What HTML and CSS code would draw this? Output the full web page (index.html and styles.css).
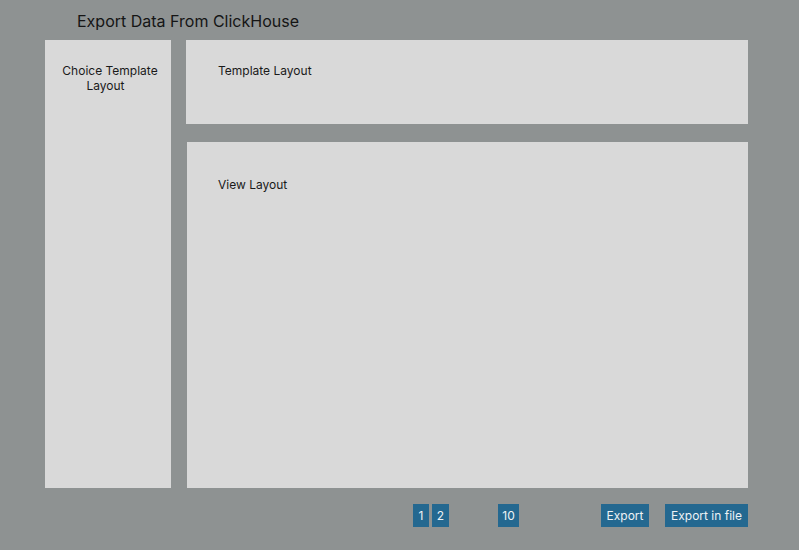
FILE: index.html
```html
<!DOCTYPE html>
<html>
<head>
<meta charset="utf-8">
<link rel="stylesheet" href="styles.css">
</head>
<body>
<div class="page">
  <header class="header"><h1 class="title">Export Data From ClickHouse</h1></header>
  <main class="main">
    <aside class="sidebar">Choice Template<br>Layout</aside>
    <div class="content">
      <section class="template-panel">Template Layout</section>
      <section class="view-panel">View Layout</section>
    </div>
  </main>
  <footer class="footer">
    <div class="pager">
      <span class="btn btn-1">1</span>
      <span class="btn btn-2">2</span>
      <span class="btn btn-10">10</span>
    </div>
    <span class="btn btn-export">Export</span>
    <span class="btn btn-file">Export in file</span>
  </footer>
</div>
</body>
</html>
```

FILE: styles.css
```css
html, body {
  margin: 0;
  padding: 0;
}
body {
  background: #8e9292;
  font-family: Inter, "Noto Sans", sans-serif;
  color: #1a1a1a;
  width: 799px;
  height: 550px;
  overflow: hidden;
}
.header {
  height: 40px;
  box-sizing: border-box;
  padding: 11px 0 0 77px;
}
.title {
  margin: 0;
  font-size: 16px;
  font-weight: 400;
  line-height: 20px;
  color: #151515;
}
.main {
  display: flex;
  margin-left: 45px;
  height: 448px;
  gap: 15px;
}
.sidebar {
  width: 126px;
  background: #d9d9d9;
  box-sizing: border-box;
  padding: 23px 5px 0 0;
  text-indent: 9px;
  text-align: center;
  font-size: 12px;
  line-height: 15px;
}
.content {
  width: 562px;
  display: flex;
  flex-direction: column;
  gap: 18px;
}
.template-panel {
  height: 84px;
  background: #d9d9d9;
  box-sizing: border-box;
  padding: 23px 0 0 32px;
  font-size: 12px;
  line-height: 15px;
}
.view-panel {
  flex: 1;
  margin-left: 1px;
  background: #d9d9d9;
  box-sizing: border-box;
  padding: 35px 0 0 31px;
  font-size: 12px;
  line-height: 15px;
}
.footer {
  display: flex;
  margin: 16px 0 0 413px;
  height: 23px;
}
.pager {
  display: flex;
}
.btn {
  display: flex;
  align-items: center;
  justify-content: center;
  height: 23px;
  background: #246890;
  color: #eef2f5;
  font-size: 12px;
}
.btn-1 { width: 16px; }
.btn-2 { width: 17px; margin-left: 3px; }
.btn-10 { width: 21px; margin-left: 49px; }
.btn-export { width: 48px; margin-left: 82px; }
.btn-file { width: 83px; margin-left: 16px; }
```
